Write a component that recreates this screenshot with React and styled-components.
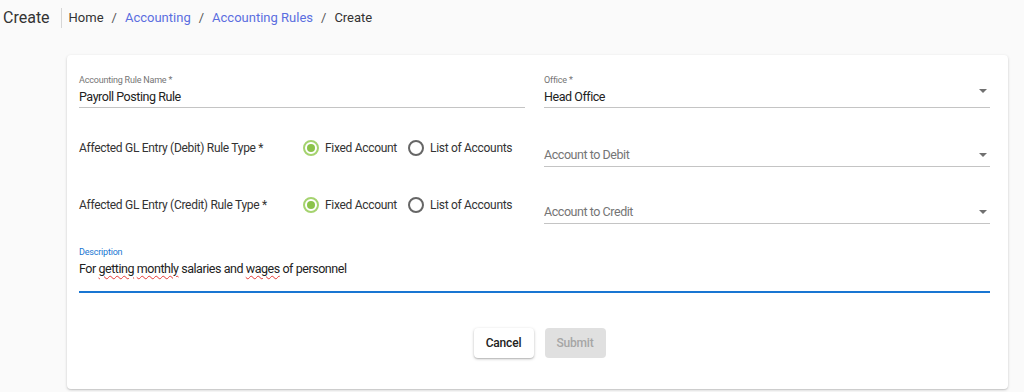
import React from "react";
import styled, { createGlobalStyle } from "styled-components";

const Global = createGlobalStyle`
  html, body { margin: 0; padding: 0; background: #fafafa; }
  body { font-family: Roboto, "Noto Sans", Arial, sans-serif; color: #333; }
  * { box-sizing: border-box; }
`;

const Page = styled.div`
  width: 1024px;
  height: 392px;
  background: #fafafa;
  overflow: hidden;
`;

const Header = styled.header`
  display: flex;
  align-items: center;
  height: 35px;
  padding-left: 3px;
`;

const Title = styled.h1`
  margin: 0;
  font-size: 16px;
  font-weight: 400;
  color: #333;
  line-height: 20px;
`;

const Divider = styled.span`
  width: 1px;
  height: 20px;
  background: #d6d6d6;
  margin: 0 7px 0 11px;
`;

const Crumbs = styled.nav`
  display: flex;
  align-items: center;
  font-size: 13px;
  gap: 8px;
`;

const Crumb = styled.span`
  color: ${(p) => (p.$link ? "#5a6ee0" : "#333")};
`;

const Sep = styled.span`
  color: #555;
`;

const Card = styled.section`
  margin: 20px 0 0 67px;
  width: 941px;
  background: #fff;
  border-radius: 4px;
  box-shadow: 0 1px 3px rgba(0, 0, 0, 0.18), 0 1px 1px rgba(0, 0, 0, 0.08);
  padding: 19px 19px 31px 12px;
  display: flex;
  flex-direction: column;
`;

const Row = styled.div`
  display: grid;
  grid-template-columns: 446px 446px;
  column-gap: 19px;
  margin-top: ${(p) => p.$mt || 0}px;
`;

const Field = styled.div`
  position: relative;
  border-bottom: 1px solid #c4c4c4;
  padding-bottom: ${(p) => p.$pb || 2}px;
  padding-top: ${(p) => p.$pt || 0}px;
`;

const SmallLabel = styled.div`
  font-size: 9px;
  letter-spacing: -0.2px;
  line-height: 12px;
  color: ${(p) => (p.$focused ? "#1976d2" : "#757575")};
`;

const Value = styled.div`
  font-size: 12.5px;
  letter-spacing: -0.45px;
  line-height: 16px;
  margin-top: ${(p) => (p.$mt === undefined ? 3 : p.$mt)}px;
  color: ${(p) => (p.$placeholder ? "#757575" : "#222")};
`;

const Arrow = styled.span`
  position: absolute;
  right: 3px;
  top: ${(p) => p.$top}px;
  width: 0;
  height: 0;
  border-left: 4.5px solid transparent;
  border-right: 4.5px solid transparent;
  border-top: 4.5px solid #707070;
`;

const RadioLine = styled.div`
  display: flex;
  align-items: center;
  padding-top: 10px;
  height: 28px;
  align-self: start;
  white-space: nowrap;
`;

const RadioLabel = styled.div`
  width: 224px;
  font-size: 12px;
  letter-spacing: -0.3px;
  line-height: 18px;
  color: #333;
`;

const RadioGroup = styled.div`
  display: flex;
  align-items: center;
  gap: 11px;
`;

const RadioOption = styled.label`
  display: flex;
  align-items: center;
  gap: 6px;
  font-size: 12px;
  letter-spacing: -0.3px;
  line-height: 18px;
  color: #333;
`;

const Circle = styled.span`
  width: 16px;
  height: 16px;
  border-radius: 50%;
  border: 2px solid ${(p) => (p.$checked ? "#a5d36f" : "#666")};
  display: flex;
  align-items: center;
  justify-content: center;
  &::after {
    content: "";
    width: 8px;
    height: 8px;
    border-radius: 50%;
    background: ${(p) => (p.$checked ? "#8bc34a" : "transparent")};
  }
`;

const FullField = styled.div`
  margin-top: 22px;
  width: 911px;
  border-bottom: 2px solid #1976d2;
  padding-bottom: 14px;
`;

const Typo = styled.span`
  text-decoration: underline wavy #e53935;
  text-decoration-thickness: 1px;
  text-underline-offset: 2px;
`;

const Actions = styled.div`
  display: flex;
  justify-content: center;
  gap: 11px;
  margin-top: 35px;
  padding-left: 11px;
`;

const Button = styled.button`
  font-family: Roboto, Arial, sans-serif;
  font-size: 12px;
  letter-spacing: -0.2px;
  font-weight: 500;
  height: 30px;
  width: ${(p) => p.$w}px;
  border: none;
  border-radius: 4px;
  background: ${(p) => (p.$disabled ? "#e0e0e0" : "#fff")};
  color: ${(p) => (p.$disabled ? "#a6a6a6" : "#222")};
  box-shadow: ${(p) =>
    p.$disabled ? "none" : "0 1px 3px rgba(0,0,0,0.25), 0 1px 1px rgba(0,0,0,0.1)"};
`;

function Radio({ label, options }) {
  return (
    <RadioLine>
      <RadioLabel>{label}</RadioLabel>
      <RadioGroup>
        {options.map((o, i) => (
          <RadioOption key={o}>
            <Circle $checked={i === 0} />
            {o}
          </RadioOption>
        ))}
      </RadioGroup>
    </RadioLine>
  );
}

export default function App() {
  const opts = ["Fixed Account", "List of Accounts"];
  return (
    <Page>
      <Global />
      <Header>
        <Title>Create</Title>
        <Divider />
        <Crumbs>
          <Crumb>Home</Crumb>
          <Sep>/</Sep>
          <Crumb $link>Accounting</Crumb>
          <Sep>/</Sep>
          <Crumb $link>Accounting Rules</Crumb>
          <Sep>/</Sep>
          <Crumb>Create</Crumb>
        </Crumbs>
      </Header>
      <Card>
        <Row>
          <Field>
            <SmallLabel>Accounting Rule Name *</SmallLabel>
            <Value>Payroll Posting Rule</Value>
          </Field>
          <Field>
            <SmallLabel>Office *</SmallLabel>
            <Value>Head Office</Value>
            <Arrow $top={15} />
          </Field>
        </Row>
        <Row $mt={21}>
          <Radio label="Affected GL Entry (Debit) Rule Type *" options={opts} />
          <Field $pt={18} $pb={3}>
            <Value $placeholder $mt={0}>Account to Debit</Value>
            <Arrow $top={24} />
          </Field>
        </Row>
        <Row $mt={19}>
          <Radio label="Affected GL Entry (Credit) Rule Type *" options={opts} />
          <Field $pt={18} $pb={3}>
            <Value $placeholder $mt={0}>Account to Credit</Value>
            <Arrow $top={24} />
          </Field>
        </Row>
        <FullField>
          <SmallLabel $focused>Description</SmallLabel>
          <Value>
            For <Typo>getting</Typo> <Typo>monthly</Typo> salaries and <Typo>wages</Typo> of personnel
          </Value>
        </FullField>
        <Actions>
          <Button $w={60}>Cancel</Button>
          <Button $w={61} $disabled>Submit</Button>
        </Actions>
      </Card>
    </Page>
  );
}
